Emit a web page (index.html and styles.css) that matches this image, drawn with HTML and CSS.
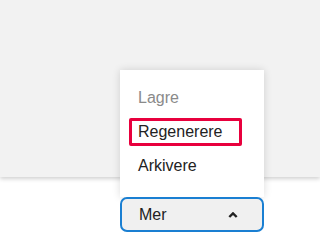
FILE: index.html
```html
<!DOCTYPE html>
<html lang="no">
<head>
<meta charset="utf-8">
<link rel="stylesheet" href="styles.css">
</head>
<body>
<div class="panel"></div>
<div class="footer">
  <div class="dropdown">
    <ul class="menu">
      <li class="item disabled">Lagre</li>
      <li class="item focused">Regenerere</li>
      <li class="item">Arkivere</li>
    </ul>
    <button class="toggle">
      <span class="label">Mer</span>
      <svg class="chev" width="10" height="6" viewBox="0 0 10 6"><path d="M1.3 5 L5 1.4 L8.7 5" fill="none" stroke="#222" stroke-width="2.4" stroke-linecap="butt" stroke-linejoin="miter"/></svg>
    </button>
  </div>
</div>
</body>
</html>
```
FILE: styles.css
```css
html, body {
  margin: 0;
  padding: 0;
  background: #ffffff;
  font-family: "Liberation Sans", Arial, sans-serif;
}
.panel {
  height: 177px;
  background: #f2f2f2;
  box-shadow: 0 2px 4px rgba(0, 0, 0, 0.18);
  position: relative;
  z-index: 0;
}
.footer {
  display: flex;
  padding: 20px 0 0 120px;
}
.dropdown {
  position: relative;
  width: 144px;
}
.menu {
  position: absolute;
  left: 0;
  right: 0;
  bottom: 100%;
  margin: 0;
  padding: 14px 0 17px 0;
  list-style: none;
  background: #ffffff;
  box-shadow: 0 0 8px rgba(0, 0, 0, 0.14);
  z-index: 2;
  display: flex;
  flex-direction: column;
  gap: 6px;
}
.item {
  margin: 0 22px 0 9px;
  padding: 0 6px;
  height: 28px;
  box-sizing: border-box;
  border: 3px solid transparent;
  border-radius: 2px;
  font-size: 16px;
  line-height: 22px;
  color: #222222;
}
.item.disabled {
  color: #8a8a8a;
}
.item.focused {
  border-color: #e8003d;
}
.toggle {
  display: flex;
  align-items: center;
  justify-content: space-between;
  width: 144px;
  height: 35px;
  box-sizing: border-box;
  padding: 0 24px 0 17px;
  border: 2px solid #1a7fd2;
  border-radius: 7px;
  background: #f0f0f0;
  font-family: "Liberation Sans", Arial, sans-serif;
  font-size: 16px;
  color: #222222;
  position: relative;
  z-index: 3;
}
.chev {
  display: block;
}
```
